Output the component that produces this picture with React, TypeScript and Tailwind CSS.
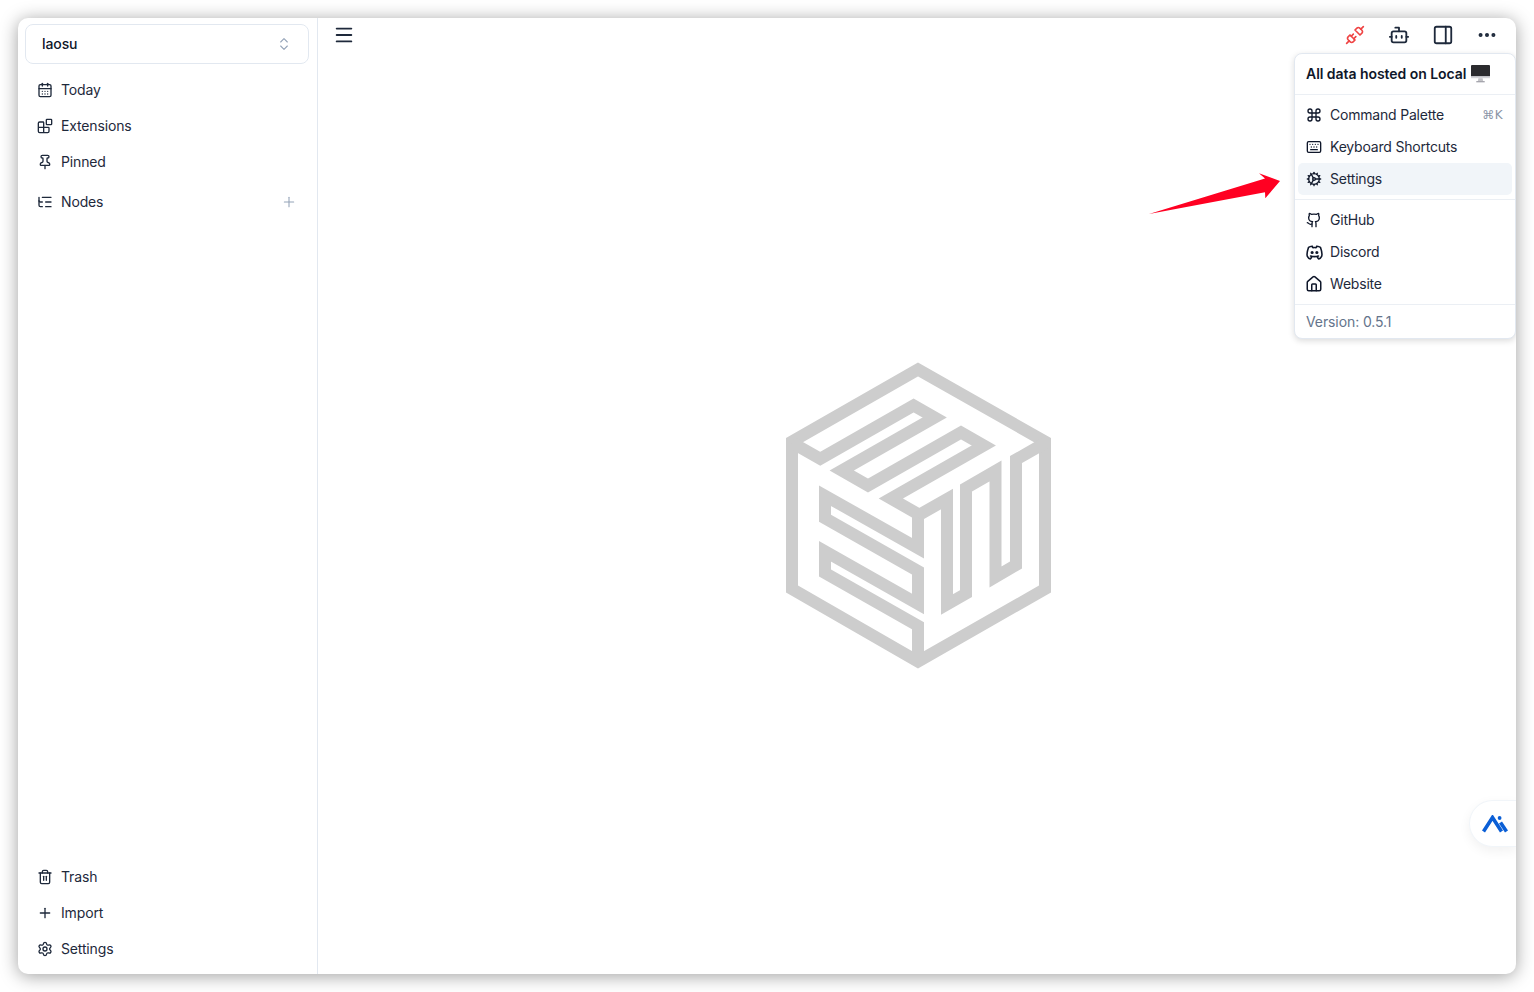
import React from "react";
import {
  Bot,
  CalendarDays,
  Blocks,
  ChevronsUpDown,
  Cog,
  Command,
  Ellipsis,
  Github,
  House,
  Keyboard,
  ListTree,
  Menu,
  PanelRight,
  Pin,
  Plus,
  Settings,
  Trash2,
  Unplug,
} from "lucide-react";
import { TbBrandDiscord } from "react-icons/tb";

const topNav = [
  { label: "Today", icon: CalendarDays },
  { label: "Extensions", icon: Blocks },
  { label: "Pinned", icon: Pin },
];

const bottomNav = [
  { label: "Trash", icon: Trash2 },
  { label: "Import", icon: Plus },
  { label: "Settings", icon: Settings },
];

const NavRow = ({ label, icon: Icon }: { label: string; icon: React.ElementType }) => (
  <div className="flex h-9 items-center gap-2 pl-[12px] text-sm tracking-[-0.15px] text-[#1e293b]">
    <Icon size={16} strokeWidth={2} className="text-[#1e293b]" />
    <span>{label}</span>
  </div>
);

const MenuRow = ({ label, icon: Icon, active, hint, iconSize = 16 }: { label: string; icon: React.ElementType; active?: boolean; hint?: string; iconSize?: number }) => (
  <div className={`flex h-8 items-center gap-2 rounded-[5px] pl-2 pr-[9px] text-sm tracking-[-0.2px] text-[#1e293b] ${active ? "bg-[#f1f5f9]" : ""}`}>
    <span className="flex w-4 shrink-0 justify-center">
      <Icon size={iconSize} strokeWidth={2} className="shrink-0 text-[#0f172a]" />
    </span>
    <span>{label}</span>
    {hint && <span className="ml-auto font-['DejaVu_Sans',sans-serif] text-xs tracking-[0.5px] text-[#8a94a6]">{hint}</span>}
  </div>
);

const Logo = () => (
  <svg viewBox="780 357 277 317" className="h-[317px] w-[277px]" fill="none" stroke="#cdcdcd" strokeWidth="12" strokeMiterlimit="10">
    <path d="M792 589V441.5L918 369.5L1045 441.5V589L918 661.5Z" />
    <path d="M792 442.7L820.25 458.75L913.6 405.5L934.7 417.5L841.7 470.5L868 485.5L961 432.5L983.8 445.5L890.8 498.5L918 514" />
    <path d="M918 514V548.3L825 495.7V518.3L918 571V604L825 551.3V573L918 625.7V661" />
    <path d="M918 515.5L947 499V604.5L966 593.6V488L995.5 471V577L1016 565V459.6L1045 443" />
  </svg>
);

const Monitor = () => (
  <svg viewBox="0 0 18 17" className="h-[18px] w-[19px]">
    <rect x="0" y="0" width="18" height="12" rx="1" fill="#2b2b2e" />
    <rect x="0" y="10.5" width="18" height="2" fill="#d4d4d8" />
    <path d="M7 12.5h4l.6 3H6.4z" fill="#c4c4c8" />
    <rect x="5" y="15.2" width="8" height="1.2" fill="#a1a1aa" />
  </svg>
);

export default function App() {
  return (
    <div className="h-[992px] w-[1534px] overflow-hidden bg-white p-[18px] font-['Inter',sans-serif]">
      <div className="relative flex h-[956px] w-[1498px] overflow-hidden rounded-[10px] bg-white shadow-[0_2px_18px_rgba(0,0,0,0.38)]">
        <aside className="flex w-[300px] flex-col justify-between border-r border-[#e2e8f0] pb-[7px] pl-[7px] pr-[8px] pt-[6px]">
          <div>
            <div className="mb-2 flex h-10 items-center justify-between rounded-lg border border-[#e2e8f0] pl-4 pr-4 text-sm font-medium tracking-[-0.1px] text-[#0f172a]">
              <span>laosu</span>
              <ChevronsUpDown size={16} strokeWidth={1.6} className="text-[#94a3b8]" />
            </div>
            {topNav.map(item => (
              <NavRow key={item.label} {...item} />
            ))}
            <div className="mt-1 flex items-center justify-between pr-3">
              <NavRow label="Nodes" icon={ListTree} />
              <Plus size={16} strokeWidth={1.6} className="text-[#94a3b8]" />
            </div>
          </div>
          <div>
            {bottomNav.map(item => (
              <NavRow key={item.label} {...item} />
            ))}
          </div>
        </aside>

        <main className="flex flex-1 flex-col">
          <header className="flex h-[34px] items-center justify-between pl-[4px] pr-[7px] text-[#1e293b]">
            <div className="flex h-9 w-11 items-center justify-center">
              <Menu size={22} strokeWidth={2} />
            </div>
            <div className="flex items-center">
              <div className="flex h-9 w-11 items-center justify-center">
                <Unplug size={20} strokeWidth={2} className="text-[#ef4444]" />
              </div>
              <div className="flex h-9 w-11 items-center justify-center">
                <Bot size={22} strokeWidth={2} />
              </div>
              <div className="flex h-9 w-11 items-center justify-center">
                <PanelRight size={22} strokeWidth={2} />
              </div>
              <div className="flex h-9 w-11 items-center justify-center">
                <Ellipsis size={22} strokeWidth={2.4} />
              </div>
            </div>
          </header>
          <div className="flex flex-1 items-center justify-center pl-[3px] pt-[4px]">
            <Logo />
          </div>
        </main>

        <div className="absolute right-0 top-[35px] w-[222px] rounded-lg border border-[#e2e8f0] bg-white shadow-[0_2px_6px_rgba(0,0,0,0.14)]">
          <div className="flex h-10 items-center gap-[5px] pl-[11px] text-sm font-semibold tracking-[-0.05px] text-[#0f172a]">
            <span>All data hosted on Local</span>
            <Monitor />
          </div>
          <div className="border-t border-[#e2e8f0]/70 px-[3px] py-1">
            <MenuRow label="Command Palette" icon={Command} hint="⌘K" />
            <MenuRow label="Keyboard Shortcuts" icon={Keyboard} />
            <MenuRow label="Settings" icon={Cog} active />
          </div>
          <div className="border-t border-[#e2e8f0]/70 px-[3px] py-1">
            <MenuRow label="GitHub" icon={Github} />
            <MenuRow label="Discord" icon={TbBrandDiscord} iconSize={19} />
            <MenuRow label="Website" icon={House} iconSize={18} />
          </div>
          <div className="flex h-[34px] items-center border-t border-[#e2e8f0]/70 pl-[11px] text-sm tracking-[-0.1px] text-[#64748b]">Version: 0.5.1</div>
        </div>

        {/* red annotation arrow */}
        <svg viewBox="0 0 132 42" className="absolute left-[1131px] top-[155px] h-[42px] w-[132px]">
          <path d="M0 41L116 5.5L110 0.3L131 8L116.3 25.3L116 19.3Z" fill="#ff0022" />
        </svg>

        <div className="absolute right-0 top-[782px] flex h-[47px] w-[47px] items-center rounded-l-full border border-r-0 border-[#f1f5f9] bg-white pl-[12px] shadow-[0_4px_12px_rgba(0,0,0,0.06)]">
          <svg viewBox="0 0 26 18" className="h-[18px] w-[26px]" fill="none" stroke="#0b5fd6" strokeWidth="3.6">
            <path d="M1.5 16.5L10.5 2.5L19.5 16.5" />
            <path d="M18.5 7.5L24.5 16.5" />
            <circle cx="17.6" cy="3" r="1.9" fill="#0b5fd6" stroke="none" />
          </svg>
        </div>
      </div>
    </div>
  );
}
